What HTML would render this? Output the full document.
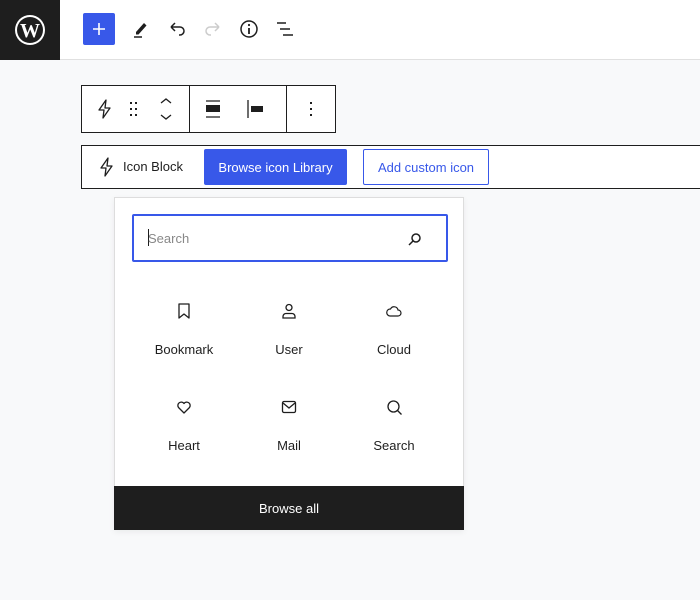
<!DOCTYPE html>
<html><head><style>
*{box-sizing:border-box;margin:0;padding:0}
body{width:700px;height:600px;background:#f8f9fa;font-family:"Liberation Sans",sans-serif;position:relative;overflow:hidden;color:#1e1e1e;font-size:13px}
.abs{position:absolute}
svg{display:block}
.top{left:0;top:0;width:700px;height:60px;background:#fff;border-bottom:1px solid #e0e0e0}
.logo{left:0;top:0;width:60px;height:60px;background:#1e1e1e;display:flex;align-items:center;justify-content:center}
.plus{left:83px;top:13px;width:32px;height:32px;background:#3858e9;border-radius:2px;color:#fff;display:flex;align-items:center;justify-content:center}
.tb{left:81px;top:85px;width:255px;height:48px;background:#fff;border:1px solid #1e1e1e}
.ph{left:81px;top:145px;width:630px;height:44px;background:#fff;border:1px solid #1e1e1e}
.btn{top:149px;height:36px;font-size:13px;display:flex;align-items:center;justify-content:center;border-radius:2px}
.pop{left:114px;top:197px;width:350px;height:333px;background:#fff;border:1px solid #ddd;box-shadow:0 2px 6px rgba(0,0,0,.06)}
.lbl{width:100px;text-align:center;font-size:13px}
</style></head><body>
<div class="abs top"></div>
<div class="abs logo"><svg width="32" height="32" viewBox="0 0 32 32"><circle cx="16" cy="16" r="15" fill="#fff"/><circle cx="16" cy="16" r="13" fill="#1e1e1e"/><text x="16" y="23" text-anchor="middle" font-family="Liberation Serif" font-weight="bold" font-size="20" fill="#fff">W</text></svg></div>
<div class="abs plus"><svg width="16" height="16"><path d="M8 2v12M2 8h12" stroke="#fff" stroke-width="1.6"/></svg></div>
<svg class="abs" style="left:130px;top:18px" width="22" height="22"><path d="M6 14l8-9 2.5 2.5-8 9H6z" fill="#1e1e1e"/><path d="M4 19h8" stroke="#1e1e1e" stroke-width="1.5"/></svg>
<svg class="abs" style="left:166px;top:18px" width="22" height="22"><path d="M5 9h9a4 4 0 0 1 0 8h-1M5 9l4-4M5 9l4 4" fill="none" stroke="#1e1e1e" stroke-width="1.5"/></svg>
<svg class="abs" style="left:202px;top:18px" width="22" height="22"><path d="M17 9H8a4 4 0 0 0 0 8h1M17 9l-4-4M17 9l-4 4" fill="none" stroke="#ccc" stroke-width="1.5"/></svg>
<svg class="abs" style="left:238px;top:18px" width="22" height="22"><circle cx="11" cy="11" r="8" fill="none" stroke="#1e1e1e" stroke-width="1.5"/><path d="M11 10v6" stroke="#1e1e1e" stroke-width="1.8"/><circle cx="11" cy="7" r="1.1" fill="#1e1e1e"/></svg>
<svg class="abs" style="left:274px;top:18px" width="22" height="22"><path d="M3 5h9M6 11h10M9 17h10" stroke="#1e1e1e" stroke-width="1.5"/></svg>

<div class="abs tb"></div>
<div class="abs" style="left:189px;top:85px;width:1px;height:48px;background:#1e1e1e"></div>
<div class="abs" style="left:286px;top:85px;width:1px;height:48px;background:#1e1e1e"></div>
<svg class="abs" style="left:95px;top:98px" width="20" height="22"><path d="M11 2L4 12h5l-1 8 7-10h-5z" fill="none" stroke="#1e1e1e" stroke-width="1.3" stroke-linejoin="round"/></svg>
<svg class="abs" style="left:128px;top:100px" width="14" height="18"><g fill="#1e1e1e"><rect x="2" y="2" width="2" height="2"/><rect x="7" y="2" width="2" height="2"/><rect x="2" y="8" width="2" height="2"/><rect x="7" y="8" width="2" height="2"/><rect x="2" y="14" width="2" height="2"/><rect x="7" y="14" width="2" height="2"/></g></svg>
<svg class="abs" style="left:158px;top:96px" width="16" height="26"><path d="M3 7l5-4 5 4M3 19l5 4 5-4" fill="none" stroke="#1e1e1e" stroke-width="1.3"/></svg>
<svg class="abs" style="left:204px;top:99px" width="20" height="20"><path d="M2 2h14M2 18h14" stroke="#1e1e1e" stroke-width="1.3"/><rect x="2" y="6" width="14" height="7" fill="#1e1e1e"/></svg>
<svg class="abs" style="left:246px;top:99px" width="20" height="20"><path d="M2 1v18" stroke="#1e1e1e" stroke-width="1.3"/><rect x="5" y="7" width="12" height="6" fill="#1e1e1e"/></svg>
<svg class="abs" style="left:304px;top:99px" width="12" height="20"><g fill="#1e1e1e"><rect x="6" y="3" width="2" height="2"/><rect x="6" y="9" width="2" height="2"/><rect x="6" y="15" width="2" height="2"/></g></svg>

<div class="abs ph"></div>
<svg class="abs" style="left:97px;top:156px" width="20" height="22"><path d="M11 2L4 12h5l-1 8 7-10h-5z" fill="none" stroke="#1e1e1e" stroke-width="1.3" stroke-linejoin="round"/></svg>
<div class="abs" style="left:123px;top:159px;font-size:13px">Icon Block</div>
<div class="abs btn" style="left:204px;width:143px;background:#3858e9;color:#fff">Browse icon Library</div>
<div class="abs btn" style="left:363px;width:126px;border:1px solid #3858e9;color:#3858e9;background:#fff">Add custom icon</div>

<div class="abs pop"></div>
<div class="abs" style="left:132px;top:214px;width:316px;height:48px;border:2px solid #3858e9;border-radius:2px;background:#fff"></div>
<div class="abs" style="left:148px;top:229px;width:1px;height:17px;background:#1e1e1e"></div>
<div class="abs" style="left:148px;top:231px;color:#888;font-size:13px">Search</div>
<svg class="abs" style="left:406px;top:230px" width="18" height="18"><circle cx="10" cy="8" r="4" fill="none" stroke="#1e1e1e" stroke-width="1.5"/><path d="M7 11l-4 4" stroke="#1e1e1e" stroke-width="1.5"/></svg>

<svg class="abs" style="left:176px;top:303px" width="16" height="16"><path d="M3 1h10v14l-5-4-5 4z" fill="none" stroke="#1e1e1e" stroke-width="1.3" stroke-linejoin="round"/></svg>
<svg class="abs" style="left:281px;top:303px" width="16" height="16"><circle cx="8" cy="4.5" r="3" fill="none" stroke="#1e1e1e" stroke-width="1.3"/><path d="M2 15v-1.5a3 3 0 0 1 3-3h6a3 3 0 0 1 3 3V15z" fill="none" stroke="#1e1e1e" stroke-width="1.3"/></svg>
<svg class="abs" style="left:386px;top:303px" width="16" height="16"><path d="M4 13h8a3 3 0 0 0 0-6 4 4 0 0 0-7.5-1A3.5 3.5 0 0 0 4 13z" fill="none" stroke="#1e1e1e" stroke-width="1.2"/></svg>
<svg class="abs" style="left:176px;top:399px" width="16" height="16"><path d="M8 14L2.5 8.5a3.2 3.2 0 0 1 5.5-4 3.2 3.2 0 0 1 5.5 4z" fill="none" stroke="#1e1e1e" stroke-width="1.3" stroke-linejoin="round"/></svg>
<svg class="abs" style="left:281px;top:399px" width="16" height="16"><rect x="1.5" y="2.5" width="13" height="11" rx="1.5" fill="none" stroke="#1e1e1e" stroke-width="1.3"/><path d="M2 4l6 5 6-5" fill="none" stroke="#1e1e1e" stroke-width="1.3"/></svg>
<svg class="abs" style="left:386px;top:399px" width="18" height="18"><circle cx="7.5" cy="7.5" r="5.5" fill="none" stroke="#1e1e1e" stroke-width="1.3"/><path d="M11.5 11.5l4 4" stroke="#1e1e1e" stroke-width="1.3"/></svg>

<div class="abs lbl" style="left:134px;top:342px">Bookmark</div>
<div class="abs lbl" style="left:239px;top:342px">User</div>
<div class="abs lbl" style="left:344px;top:342px">Cloud</div>
<div class="abs lbl" style="left:134px;top:438px">Heart</div>
<div class="abs lbl" style="left:239px;top:438px">Mail</div>
<div class="abs lbl" style="left:344px;top:438px">Search</div>

<div class="abs" style="left:114px;top:486px;width:350px;height:44px;background:#1e1e1e;color:#fff;display:flex;align-items:center;justify-content:center;font-size:13px">Browse all</div>
</body></html>
